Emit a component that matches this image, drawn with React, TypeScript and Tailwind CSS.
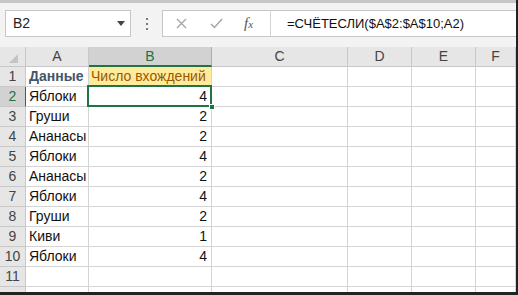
import React from "react";

const cols = [
  { key: "A", w: "w-[63px]" },
  { key: "B", w: "w-[123px]" },
  { key: "C", w: "w-[136px]" },
  { key: "D", w: "w-[64px]" },
  { key: "E", w: "w-[64px]" },
  { key: "F", w: "w-[40px]" },
];

const rows: [string, string][] = [
  ["Яблоки", "4"],
  ["Груши", "2"],
  ["Ананасы", "2"],
  ["Яблоки", "4"],
  ["Ананасы", "2"],
  ["Яблоки", "4"],
  ["Груши", "2"],
  ["Киви", "1"],
  ["Яблоки", "4"],
];

const font = { fontFamily: '"Liberation Sans", Arial, sans-serif' };

function RowHead({ n, active }: { n?: string; active?: boolean }) {
  return (
    <div
      className={
        "w-[26px] shrink-0 flex items-center justify-center border-r border-b border-[#c8c8c8] text-[14px] " +
        (active ? "bg-[#d2d2d2] text-[#217346] border-r-[#217346]" : "bg-[#e6e6e6] text-[#444]")
      }
    >
      {n}
    </div>
  );
}

function EmptyCells({ from }: { from: number }) {
  return (
    <>
      {cols.slice(from).map((c) => (
        <div key={c.key} className={c.w + " shrink-0 border-r border-b border-[#d4d4d4]"} />
      ))}
    </>
  );
}

export default function App() {
  return (
    <div className="w-[518px] h-[295px] overflow-hidden bg-white flex border-r-2 border-[#222]" style={font}>
      <div className="flex-1 flex flex-col min-w-0">
        <div className="h-[3px] bg-[#c6c6c6] shrink-0" />
        {/* formula bar */}
        <div className="h-[44px] shrink-0 bg-[#f3f3f3] flex items-start pt-[7px]">
          <div className="ml-[5px] w-[126px] h-[27px] bg-white border border-[#c6c6c6] flex items-center pl-[7px] pr-[5px] text-[14px] text-[#222]">
            <span className="flex-1">B2</span>
            <span className="w-0 h-0 border-l-[4px] border-r-[4px] border-t-[5px] border-l-transparent border-r-transparent border-t-[#444]" />
          </div>
          <div className="w-[31px] h-[27px] flex flex-col items-center justify-center gap-[3px]">
            <span className="w-[2px] h-[2px] bg-[#7a7a7a]" />
            <span className="w-[2px] h-[2px] bg-[#7a7a7a]" />
            <span className="w-[2px] h-[2px] bg-[#7a7a7a]" />
          </div>
          <div className="flex-1 h-[27px] bg-white border border-[#c6c6c6] border-r-0 flex items-center">
            <div className="w-[108px] h-full flex items-center border-r border-[#d4d4d4]">
              <svg className="ml-[13px]" width="11" height="11" viewBox="0 0 11 11">
                <path d="M1 1 L10 10 M10 1 L1 10" stroke="#a6a6a6" strokeWidth="1.4" fill="none" />
              </svg>
              <svg className="ml-[23px]" width="13" height="11" viewBox="0 0 13 11">
                <path d="M1 6 L4.5 9.5 L12 1" stroke="#a6a6a6" strokeWidth="1.5" fill="none" />
              </svg>
              <span
                className="ml-[21px] text-[15px] italic text-[#555]"
                style={{ fontFamily: '"Liberation Serif", "Times New Roman", serif' }}
              >
                f<span className="text-[11px]">x</span>
              </span>
            </div>
            <span className="ml-[16px] text-[13px] text-[#111] whitespace-nowrap">=СЧЁТЕСЛИ($A$2:$A$10;A2)</span>
          </div>
        </div>

        {/* grid */}
        <div className="flex-1 flex flex-col border-b-[3px] border-[#222] overflow-hidden">
          {/* header */}
          <div className="h-[20px] shrink-0 flex">
            <div className="w-[26px] shrink-0 bg-[#e6e6e6] border-r border-b border-[#c8c8c8] relative">
              <svg className="absolute right-[7px] bottom-[3px]" width="9" height="9" viewBox="0 0 9 9">
                <path d="M9 0 L9 9 L0 9 Z" fill="#c4c4c4" />
              </svg>
            </div>
            {cols.map((c) => (
              <div
                key={c.key}
                className={
                  c.w +
                  " shrink-0 flex items-center justify-center text-[14px] border-r " +
                  (c.key === "B"
                    ? "bg-[#d2d2d2] text-[#217346] border-r-[#ababab] border-b-2 border-b-[#217346]"
                    : "bg-[#e6e6e6] text-[#444] border-r-[#c8c8c8] border-b border-b-[#c8c8c8]")
                }
              >
                {c.key}
              </div>
            ))}
          </div>

          {/* row 1 */}
          <div className="h-[20px] shrink-0 flex">
            <RowHead n="1" />
            <div className="w-[63px] shrink-0 border-r border-b border-[#d4d4d4] pl-[3px] flex items-center text-[14px] font-bold text-[#44546a] whitespace-nowrap">
              Данные
            </div>
            <div className="w-[123px] shrink-0 border-r border-b border-[#d4d4d4] bg-[#ffeb9c] pl-[2px] flex items-center text-[14px] text-[#9c5700] whitespace-nowrap">
              Число вхождений
            </div>
            <EmptyCells from={2} />
          </div>

          {rows.map(([a, b], i) => {
            const n = i + 2;
            const active = n === 2;
            return (
              <div key={n} className="h-[20px] shrink-0 flex">
                <RowHead n={String(n)} active={active} />
                <div className="w-[63px] shrink-0 border-r border-b border-[#d4d4d4] pl-[3px] flex items-center text-[14px] text-[#111] whitespace-nowrap">
                  {a}
                </div>
                <div className="w-[123px] shrink-0 border-r border-b border-[#d4d4d4] pr-[4px] flex items-center justify-end text-[14px] text-[#111] relative">
                  {b}
                  {active && (
                    <>
                      <span className="absolute z-10 -left-[2px] -top-[2px] -right-[1px] -bottom-[1px] border-2 border-[#217346]" />
                      <span className="absolute z-20 -right-[4px] -bottom-[4px] w-[6px] h-[6px] bg-[#217346] border border-white" />
                    </>
                  )}
                </div>
                <EmptyCells from={2} />
              </div>
            );
          })}

          <div className="h-[20px] shrink-0 flex">
            <RowHead n="11" />
            <EmptyCells from={0} />
          </div>
          <div className="h-[20px] shrink-0 flex">
            <RowHead />
            <EmptyCells from={0} />
          </div>
        </div>
      </div>
    </div>
  );
}
